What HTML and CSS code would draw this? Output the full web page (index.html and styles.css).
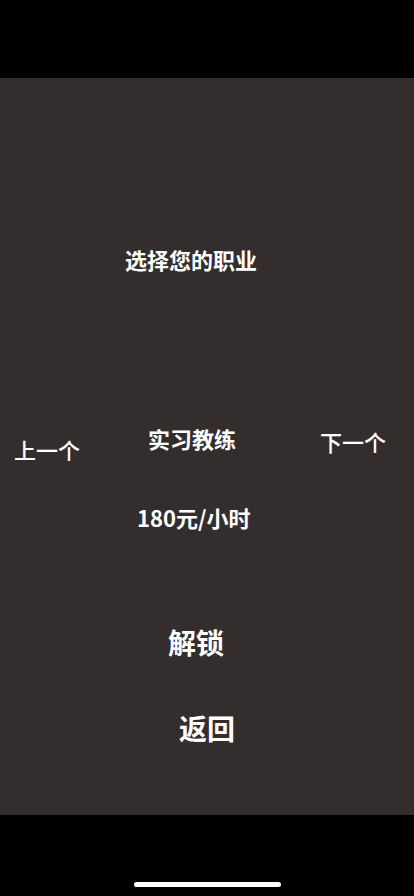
FILE: index.html
```html
<!DOCTYPE html>
<html lang="zh">
<head>
<meta charset="utf-8">
<meta name="viewport" content="width=device-width, initial-scale=1">
<title>选择您的职业</title>
<link rel="stylesheet" href="styles.css">
</head>
<body>
<div class="screen">
  <div class="top-bar"></div>
  <main class="panel">
    <h1 class="title">选择您的职业</h1>
    <div class="chooser">
      <span class="nav nav-prev">上一个</span>
      <span class="job">实习教练</span>
      <span class="nav nav-next">下一个</span>
    </div>
    <div class="price">180元/小时</div>
    <div class="action unlock">解锁</div>
    <div class="action back">返回</div>
  </main>
  <div class="bottom-bar"><span class="home-indicator"></span></div>
</div>
</body>
</html>
```

FILE: styles.css
```css
html, body {
  margin: 0;
  padding: 0;
  background: #000;
}
body {
  font-family: "Noto Sans CJK SC", "Noto Sans", sans-serif;
  color: #fff;
}
.screen {
  width: 414px;
  height: 896px;
  display: flex;
  flex-direction: column;
}
.top-bar {
  height: 78px;
  background: #000;
}
.panel {
  height: 737px;
  background: #332d2e;
  display: flex;
  flex-direction: column;
}
.title {
  margin: 166px 0 0 0;
  padding-left: 125px;
  font-size: 22px;
  line-height: 30px;
  font-weight: 700;
}
.chooser {
  margin-top: 149px;
  display: flex;
  align-items: flex-start;
  padding: 0 28px 0 14px;
}
.nav {
  font-size: 22px;
  line-height: 30px;
  font-weight: 500;
}
.nav-prev {
  margin-top: 11px;
}
.job {
  margin-left: 68px;
  font-size: 22px;
  line-height: 30px;
  font-weight: 700;
}
.nav-next {
  margin-left: auto;
  margin-top: 3px;
}
.price {
  margin-top: 38px;
  padding-left: 137px;
  font-size: 22px;
  line-height: 30px;
  font-weight: 700;
}
.action {
  font-size: 28px;
  line-height: 36px;
  font-weight: 700;
}
.unlock {
  margin-top: 92px;
  padding-left: 168px;
}
.back {
  margin-top: 50px;
  padding-left: 179px;
}
.bottom-bar {
  height: 81px;
  background: #000;
  display: flex;
  justify-content: center;
}
.home-indicator {
  margin-top: 67px;
  width: 147px;
  height: 5px;
  border-radius: 3px;
  background: #fff;
}
```
